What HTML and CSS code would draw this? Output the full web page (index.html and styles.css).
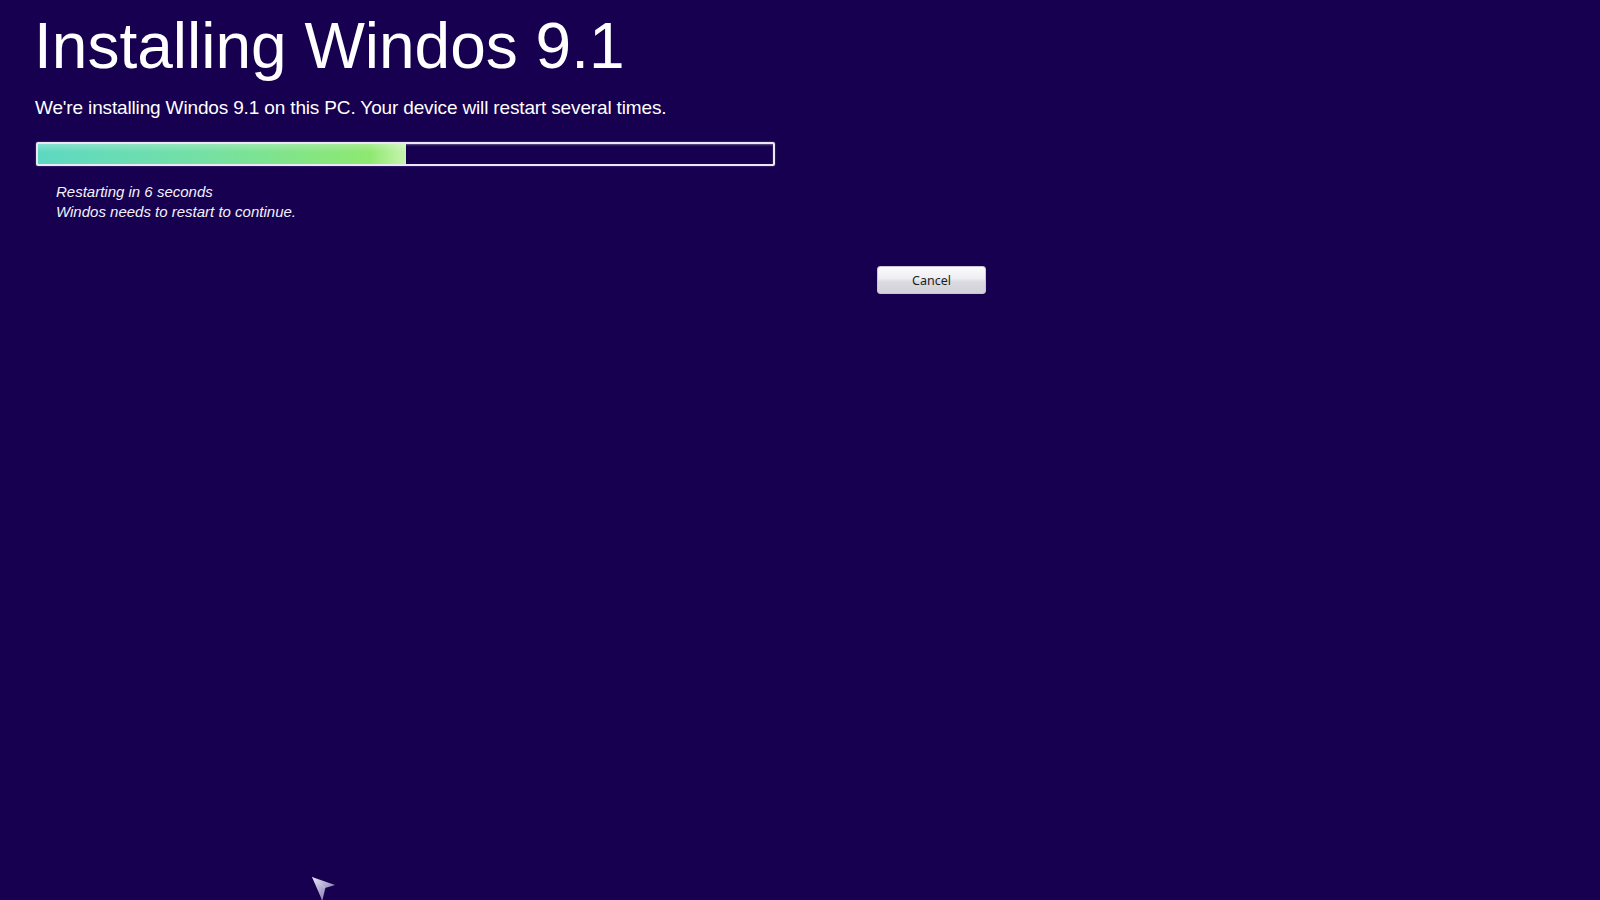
FILE: index.html
```html
<!DOCTYPE html>
<html>

<head>
	<meta charset="utf-8">
	<title>Installing Windos 9.1</title>
	<link rel="stylesheet" href="styles.css">
</head>

<body>

	<main class="setup">
		<h1 class="overskrift">Installing Windos 9.1</h1>
		<p class="undertekst">We're installing Windos 9.1 on this PC. Your device will restart several times.</p>

		<div class="bar">
			<div class="fyld" style="width: 50.1%"></div>
		</div>

		<div class="status">
			<p>Restarting in 6 seconds</p>
			<p>Windos needs to restart to continue.</p>
		</div>

		<button class="knap">Cancel</button>
	</main>

	<svg class="musen" width="30" height="30" viewBox="0 0 30 30">
		<defs>
			<linearGradient id="pil" x1="0" y1="0" x2="1" y2="1">
				<stop offset="0" stop-color="#eeeaf8" />
				<stop offset="0.55" stop-color="#a69dc9" />
				<stop offset="1" stop-color="#6a5fa0" />
			</linearGradient>
		</defs>
		<path d="M7 7 L30 15 L20 18 L17 30 Z" fill="url(#pil)" />
		<path d="M7 7 L20 18 L17 30" fill="none" stroke="#d9d2f2" stroke-width="0.8" opacity="0.6" />
	</svg>

</body>

</html>
```

FILE: styles.css
```css
body {
	background-color: #16004f;
	margin: 0;
	color: #ffffff;
	font-family: "Liberation Sans", Arial, sans-serif;
	height: 900px;
	overflow: hidden;
}

.setup {
	padding-left: 36px;
	display: flex;
	flex-direction: column;
	align-items: flex-start;
}

.overskrift {
	font-size: 64px;
	font-weight: normal;
	line-height: 1;
	margin: 14px 0 0 -2px;
}

.undertekst {
	font-size: 19px;
	line-height: 1;
	letter-spacing: -0.15px;
	margin: 20px 0 0 -1px;
}

.bar {
	box-sizing: border-box;
	width: 739px;
	height: 24px;
	margin-top: 25px;
	border: 2px solid #ebe7f6;
	border-radius: 2px;
	box-shadow: inset 0 1px 2px rgba(255, 255, 255, 0.35), 0 0 2px rgba(180, 170, 230, 0.5);
	background-color: #16004f;
}

.fyld {
	height: 100%;
	background: linear-gradient(to bottom, rgba(255, 255, 255, 0.25), rgba(255, 255, 255, 0) 40%),
		linear-gradient(to right, #5ed8c2 0%, #74e0a4 45%, #8ee870 90%, #c8f5b0 100%);
}

.status {
	margin: 16px 0 0 20px;
	font-style: italic;
	font-size: 15px;
	line-height: 20px;
	color: #f4f2fa;
}

.status p {
	margin: 0;
}

.knap {
	margin: 44px 0 0 841px;
	width: 109px;
	height: 28px;
	border: 1px solid #c9c6d4;
	border-radius: 3px;
	background: linear-gradient(to bottom, #fbfbfd 0%, #eeedf2 45%, #dcdbe2 55%, #d2d1d8 100%);
	font-family: "Noto Sans", "Open Sans", sans-serif;
	font-size: 12.5px;
	color: #1c1c1c;
	padding: 0;
}

.musen {
	position: absolute;
	left: 305px;
	top: 870px;
}
```
